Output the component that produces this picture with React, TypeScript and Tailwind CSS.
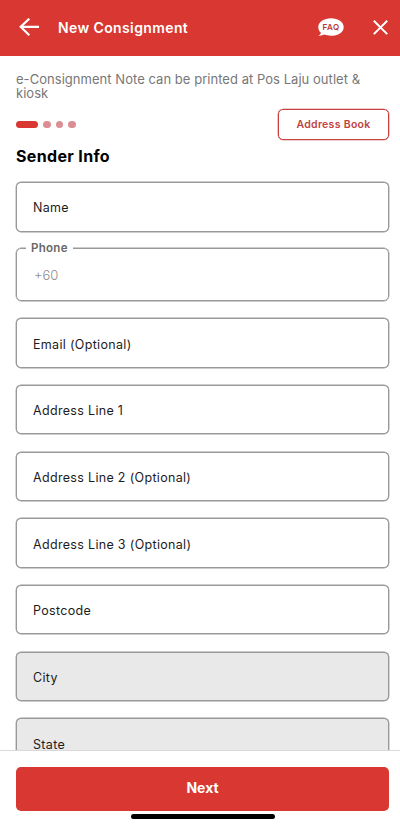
import React from 'react';

interface FieldProps {
  label: string;
  disabled?: boolean;
}

const Field: React.FC<FieldProps> = ({ label, disabled }) => {
  return (
    <div
      className={`flex h-[49.5px] shrink-0 items-center rounded-[5px] border border-[#999] px-4 pt-[3px] shadow-[0_0_0_0.4px_#999] ${
        disabled ? 'bg-[#e9e9e9]' : 'bg-white'
      }`}
    >
      <span className="text-[12.5px] leading-4 tracking-[0.32px] text-[#1c1c1c]">{label}</span>
    </div>
  );
};

const fields: FieldProps[] = [
  { label: 'Email (Optional)' },
  { label: 'Address Line 1' },
  { label: 'Address Line 2 (Optional)' },
  { label: 'Address Line 3 (Optional)' },
  { label: 'Postcode' },
  { label: 'City', disabled: true },
  { label: 'State', disabled: true },
];

const App: React.FC = () => {
  return (
    <div className="flex h-[827px] w-[400px] flex-col overflow-hidden bg-white font-['Inter',sans-serif]">
      <header className="flex h-14 shrink-0 items-center bg-[#d93731] pr-3 pl-[19px] text-white">
        <svg width="20" height="20" viewBox="0 0 20 20" fill="none" stroke="currentColor" strokeWidth="2.2">
          <path d="M20 8.800H1.700M10.300.700L1.700 8.800l8.600 8.400" />
        </svg>
        <h1 className="ml-[19px] text-[14px] leading-5 font-semibold tracking-[0.38px]">New Consignment</h1>
        <svg className="ml-auto" width="26" height="20" viewBox="0 0 26 20">
          <path
            d="M13 .3C20 .3 25.700 4 25.700 9.200S20 17.800 13 17.800c-2.500 0-4.600-.5-6.500-1.200C4.700 17.500 2.600 17.900.5 17.700c1.400-.8 2.200-1.700 2.500-2.900C1.200 13.300.3 11.300.3 9.200.3 4 6 .3 13 .3z"
            fill="#fff"
          />
          <text x="13.2" y="12" textAnchor="middle" fontSize="8" fontWeight="600" letterSpacing="0.500" fill="#b73732">
            FAQ
          </text>
        </svg>
        <svg className="ml-[29px]" width="15" height="16" viewBox="0 0 15 16" fill="none" stroke="currentColor" strokeWidth="2">
          <path d="M.8.700l13.400 13.400M14.200.700L.8 14.100" />
        </svg>
      </header>

      <main className="flex min-h-0 flex-1 flex-col overflow-hidden pr-[11px] pl-4">
        <p className="mt-4 text-[13px] leading-[14px] tracking-[0.04px] text-[#777]">
          e-Consignment Note can be printed at Pos Laju outlet &amp; kiosk
        </p>

        <div className="mt-[9px] flex items-center justify-between">
          <div className="flex items-center gap-[5px]">
            <span className="h-[7px] w-[22px] rounded-full bg-[#d93731]" />
            <span className="size-[7.500px] rounded-full bg-[#dc8e95]" />
            <span className="size-[7.500px] rounded-full bg-[#dc8e95]" />
            <span className="size-[7.500px] rounded-full bg-[#dc8e95]" />
          </div>
          <button className="h-[31px] w-[111px] rounded-[5px] border border-[#c9403e] pt-px text-[10.500px] font-semibold tracking-[0.3px] text-[#c14341] shadow-[0_0_0_0.3px_#c9403e]">
            Address Book
          </button>
        </div>

        <h2 className="mt-[6px] text-[16px] leading-5 font-bold tracking-[0.35px] text-black">Sender Info</h2>

        <div className="mt-4 flex flex-col gap-[17.170px]">
          <Field label="Name" />
          <fieldset className="-mt-[8.5px] h-[61px] shrink-0 rounded-[5px] border border-[#999] pl-[17px] shadow-[0_0_0_0.4px_#999]">
            <legend className="-ml-[8px] bg-white px-[5px] text-[11.500px] leading-4 font-semibold tracking-[0.3px] text-[#666]">
              Phone
            </legend>
            <span className="mt-[9px] block text-[13px] leading-5 font-light text-[#8c8c8c]">+60</span>
          </fieldset>
          {fields.map((field) => (
            <Field key={field.label} label={field.label} disabled={field.disabled} />
          ))}
        </div>
      </main>

      <footer className="flex h-[77px] shrink-0 flex-col border-t border-[#d9d9d9] bg-white pt-4 pr-[11px] pl-4">
        <button className="h-11 shrink-0 rounded-[5px] bg-[#d93731] pb-[3px] text-[14px] font-bold text-white">Next</button>
        <div className="mt-[3px] ml-[115px] h-[5px] w-36 shrink-0 rounded-full bg-black" />
      </footer>
    </div>
  );
};

export default App;
